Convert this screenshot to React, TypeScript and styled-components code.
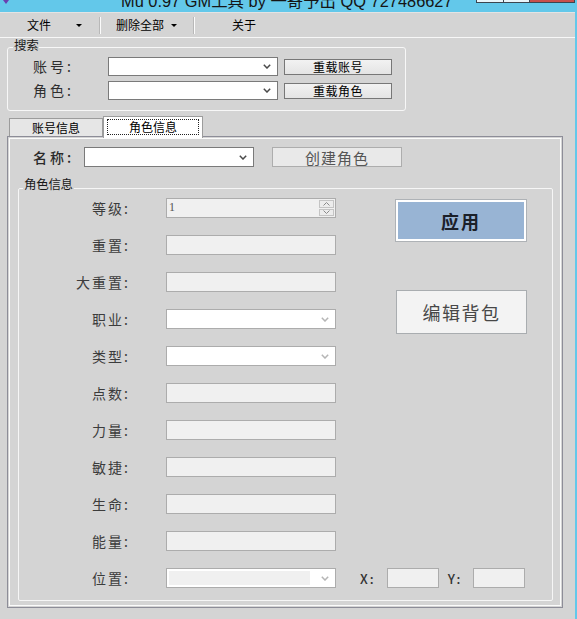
import React from "react";
import styled, { createGlobalStyle } from "styled-components";

const GlobalStyle = createGlobalStyle`
  html, body { margin: 0; padding: 0; background: #d4d4d4; }
  body { font-family: "Noto Sans CJK SC", "Noto Sans", sans-serif; overflow: hidden; }
  * { box-sizing: border-box; }
`;

const BG = "#d4d4d4";

const Window = styled.div`
  width: 577px;
  height: 619px;
  background: ${BG};
  display: flex;
  flex-direction: column;
  overflow: hidden;
`;

const TitleBar = styled.div`
  height: 12px;
  flex: none;
  background: #63c8ea;
  display: flex;
  align-items: flex-start;
  overflow: hidden;
`;

const AppIcon = styled.svg`
  flex: none;
  margin-left: 3px;
`;

const TitleText = styled.div`
  margin-left: 112px;
  margin-top: -7px;
  font: 16.4px/17px "Liberation Sans", "Noto Sans CJK SC", sans-serif;
  color: #151515;
  white-space: nowrap;
`;

const Controls = styled.div`
  margin-left: auto;
  margin-right: 2px;
  display: flex;
`;

const CtrlBtn = styled.div<{ $w: number; $close?: boolean }>`
  width: ${(p) => p.$w}px;
  height: 3px;
  background: ${(p) => (p.$close ? "#c7504d" : "#e9f5fa")};
  border: 1px solid #3b4650;
  border-top: none;
  & + & { border-left: none; }
`;

const Frame = styled.div`
  flex: 1;
  display: flex;
  flex-direction: column;
  border-right: 2px solid #63c8ea;
`;

const MenuBar = styled.div`
  height: 26px;
  flex: none;
  display: flex;
  align-items: center;
  padding-left: 27px;
  border-top: 1px solid #e4e4e4;
  border-bottom: 1px solid #f7f7f7;
  font-size: 12px;
  color: #000;
`;

const MenuItem = styled.span<{ $ml?: number }>`
  margin-left: ${(p) => p.$ml ?? 0}px;
  line-height: 16px;
  white-space: nowrap;
`;

const MenuArrow = styled.span<{ $ml: number }>`
  margin-left: ${(p) => p.$ml}px;
  width: 0;
  height: 0;
  border-left: 3px solid transparent;
  border-right: 3px solid transparent;
  border-top: 3px solid #000;
  margin-top: 1px;
`;

const MenuSep = styled.span<{ $ml: number }>`
  margin-left: ${(p) => p.$ml}px;
  width: 2px;
  height: 17px;
  border-left: 1px solid #b8b8b8;
  border-right: 1px solid #fbfbfb;
`;

const SearchGroup = styled.div`
  position: relative;
  margin: 9px 0 0 7px;
  width: 399px;
  border: 1px solid #f7f7f7;
  border-radius: 3px;
  padding: 9px 0 10px 25px;
  display: grid;
  grid-template-columns: 75px 170px 114px;
  grid-auto-rows: 19px;
  row-gap: 5px;
  align-items: center;
`;

const Caption = styled.span<{ $top: number; $left: number }>`
  position: absolute;
  top: ${(p) => p.$top}px;
  left: ${(p) => p.$left}px;
  padding: 0 1px;
  background: ${BG};
  font-size: 12.5px;
  line-height: 14px;
  letter-spacing: -0.3px;
  color: #1a1a1a;
`;

const SearchLabel = styled.span`
  font-size: 14px;
  letter-spacing: 3px;
  color: #2e2e2e;
  line-height: 19px;
`;

const Combo = styled.div<{ $light?: boolean }>`
  height: 100%;
  background: #fff;
  border: 1px solid ${(p) => (p.$light ? "#acacac" : "#7a7a7a")};
  display: flex;
  align-items: center;
  justify-content: flex-end;
  padding: 2px 6px 2px 2px;
`;

const ComboInner = styled.div`
  flex: 1;
  align-self: stretch;
  background: #f0f0f0;
  margin-right: 11px;
`;

const SmallButton = styled.div`
  margin-left: 6px;
  height: 16px;
  border: 1px solid #777;
  background: linear-gradient(#f2f2f2, #e4e4e4);
  display: flex;
  align-items: center;
  justify-content: center;
  font-size: 12px;
  color: #000;
  letter-spacing: 0.5px;
`;

const Tabs = styled.div`
  margin: 5px 0 0 7px;
  width: 556px;
  display: flex;
  flex-direction: column;
`;

const TabStrip = styled.div`
  height: 20px;
  display: flex;
  align-items: flex-end;
  padding-left: 2px;
`;

const Tab = styled.div<{ $active?: boolean }>`
  position: relative;
  z-index: ${(p) => (p.$active ? 1 : 0)};
  width: ${(p) => (p.$active ? 100 : 94)}px;
  height: ${(p) => (p.$active ? 22 : 18)}px;
  margin-bottom: ${(p) => (p.$active ? -2 : 0)}px;
  border: 1px solid #9c9c9c;
  border-bottom: none;
  background: ${(p) => (p.$active ? "#fff" : "#e6e6e6")};
  display: flex;
  align-items: center;
  justify-content: center;
  padding: ${(p) => (p.$active ? "2px 3px 3px" : "0")};
  font-size: 12px;
  color: #000;
`;

const FocusRect = styled.div`
  flex: 1;
  align-self: stretch;
  border: 1px dotted #222;
  display: flex;
  align-items: center;
  justify-content: center;
  line-height: 14px;
`;

const Panel = styled.div`
  border: 1px solid #8d8d98;
  box-shadow: inset 0 0 0 1px ${BG}, inset 0 0 0 2px #fbfbfb;
  padding: 10px 9px 6px 10px;
`;

const NameRow = styled.div`
  margin-left: 15px;
  height: 20px;
  display: grid;
  grid-template-columns: 51px 170px 148px;
  align-items: center;
`;

const NameLabel = styled.span`
  font-size: 14px;
  font-weight: 500;
  letter-spacing: 3px;
  color: #2a2a2a;
  line-height: 20px;
`;

const BigGreyButton = styled.div`
  margin-left: 18px;
  height: 20px;
  border: 1px solid #adadad;
  background: #e9e9e9;
  display: flex;
  align-items: center;
  justify-content: center;
  font-size: 15px;
  letter-spacing: 1px;
  color: #555;
`;

const InfoGroup = styled.div`
  position: relative;
  margin-top: 21px;
  border: 1px solid #f6f6f6;
  border-radius: 2px;
  padding: 9px 25px 12px 0;
  display: grid;
  grid-template-columns: 147px 170px 1fr;
  grid-template-rows: repeat(11, 20px);
  row-gap: 17px;
`;

const FieldLabel = styled.span<{ $row: number }>`
  grid-column: 1;
  grid-row: ${(p) => p.$row};
  text-align: right;
  padding-right: 36px;
  font-size: 14px;
  letter-spacing: 2px;
  line-height: 20px;
  color: #3c3c3c;
  white-space: nowrap;
`;

const FieldCell = styled.div<{ $row: number }>`
  grid-column: 2;
  grid-row: ${(p) => p.$row};
  display: flex;
`;

const TextBox = styled.div<{ $w?: number }>`
  width: ${(p) => (p.$w ? `${p.$w}px` : "100%")};
  height: 20px;
  background: #f0f0f0;
  border: 1px solid #acacac;
`;

const SpinBox = styled.div`
  width: 100%;
  height: 20px;
  background: #f0f0f0;
  border: 1px solid #acacac;
  display: flex;
`;

const SpinValue = styled.span`
  flex: 1;
  padding-left: 2px;
  font: 12px/16px "Liberation Serif", serif;
  color: #555;
`;

const SpinButtons = styled.div`
  width: 16px;
  display: flex;
  flex-direction: column;
  padding: 1px 1px 1px 0;
  gap: 1px;
`;

const SpinBtn = styled.div`
  flex: 1;
  background: #ececec;
  border: 1px solid #c4c4c4;
  display: flex;
  align-items: center;
  justify-content: center;
`;

const ButtonsCol = styled.div`
  grid-column: 3;
  grid-row: 1 / 11;
  display: flex;
  flex-direction: column;
  align-items: flex-start;
`;

const ApplyButton = styled.div`
  margin: 1px 0 0 59px;
  width: 132px;
  height: 43px;
  border: 1px solid #aeb2b6;
  padding: 2px;
  background: #fff;
  display: flex;
`;

const ApplyFace = styled.div`
  flex: 1;
  background: #98b4d4;
  display: flex;
  align-items: center;
  justify-content: center;
  font-size: 18px;
  font-weight: 600;
  letter-spacing: 2px;
  color: #1b2029;
`;

const BagButton = styled.div`
  margin: 48px 0 0 60px;
  width: 131px;
  height: 44px;
  border: 1px solid #a9adb0;
  background: #f3f3f3;
  display: flex;
  align-items: center;
  justify-content: center;
  font-size: 18px;
  letter-spacing: 1.5px;
  color: #474747;
`;

const XYRow = styled.div`
  grid-column: 3;
  grid-row: 11;
  display: flex;
  align-items: center;
  padding-left: 24px;
`;

const XYLabel = styled.span<{ $ml?: number }>`
  margin-left: ${(p) => p.$ml ?? 0}px;
  margin-right: 11px;
  font-size: 13px;
  font-weight: 500;
  letter-spacing: 2px;
  color: #333;
`;

const Chevron = ({ color = "#4a4a4a" }: { color?: string }) => (
  <svg width="8" height="5" viewBox="0 0 8 5">
    <path d="M0.8 0.8 L4 4 L7.2 0.8" fill="none" stroke={color} strokeWidth="1.5" />
  </svg>
);

const SpinArrow = ({ up }: { up?: boolean }) => (
  <svg width="7" height="4" viewBox="0 0 7 4">
    <path d={up ? "M0.5 3.5 L3.5 0.5 L6.5 3.5" : "M0.5 0.5 L3.5 3.5 L6.5 0.5"} fill="none" stroke="#8a8a8a" strokeWidth="1" />
  </svg>
);

type Kind = "spin" | "text" | "combo" | "pos";
const fields: { label: string; kind: Kind }[] = [
  { label: "等级:", kind: "spin" },
  { label: "重置:", kind: "text" },
  { label: "大重置:", kind: "text" },
  { label: "职业:", kind: "combo" },
  { label: "类型:", kind: "combo" },
  { label: "点数:", kind: "text" },
  { label: "力量:", kind: "text" },
  { label: "敏捷:", kind: "text" },
  { label: "生命:", kind: "text" },
  { label: "能量:", kind: "text" },
  { label: "位置:", kind: "pos" },
];

function renderField(kind: Kind) {
  switch (kind) {
    case "spin":
      return (
        <SpinBox>
          <SpinValue>1</SpinValue>
          <SpinButtons>
            <SpinBtn><SpinArrow up /></SpinBtn>
            <SpinBtn><SpinArrow /></SpinBtn>
          </SpinButtons>
        </SpinBox>
      );
    case "combo":
      return (
        <Combo $light style={{ width: "100%" }}>
          <Chevron color="#b5b5b5" />
        </Combo>
      );
    case "pos":
      return (
        <Combo $light style={{ width: "100%" }}>
          <ComboInner />
          <Chevron color="#b5b5b5" />
        </Combo>
      );
    default:
      return <TextBox />;
  }
}

export default function App() {
  return (
    <>
      <GlobalStyle />
      <Window>
        <TitleBar>
          <AppIcon width="6" height="4" viewBox="0 0 6 4">
            <path d="M0 0 H6 L3 4 Z" fill="#6a3fb0" />
          </AppIcon>
          <TitleText>Mu 0.97 GM工具 by 一寄予出 QQ 727486627</TitleText>
          <Controls>
            <CtrlBtn $w={28} />
            <CtrlBtn $w={26} />
            <CtrlBtn $w={45} $close />
          </Controls>
        </TitleBar>
        <Frame>
          <MenuBar>
            <MenuItem>文件</MenuItem>
            <MenuArrow $ml={25} />
            <MenuSep $ml={17} />
            <MenuItem $ml={15}>删除全部</MenuItem>
            <MenuArrow $ml={7} />
            <MenuSep $ml={16} />
            <MenuItem $ml={37}>关于</MenuItem>
          </MenuBar>

          <SearchGroup>
            <Caption $top={-10} $left={5}>搜索</Caption>
            <SearchLabel>账号:</SearchLabel>
            <Combo><Chevron /></Combo>
            <SmallButton>重载账号</SmallButton>
            <SearchLabel>角色:</SearchLabel>
            <Combo><Chevron /></Combo>
            <SmallButton>重载角色</SmallButton>
          </SearchGroup>

          <Tabs>
            <TabStrip>
              <Tab>账号信息</Tab>
              <Tab $active>
                <FocusRect>角色信息</FocusRect>
              </Tab>
            </TabStrip>
            <Panel>
              <NameRow>
                <NameLabel>名称:</NameLabel>
                <Combo><Chevron /></Combo>
                <BigGreyButton>创建角色</BigGreyButton>
              </NameRow>

              <InfoGroup>
                <Caption $top={-12} $left={4}>角色信息</Caption>
                {fields.map((f, i) => (
                  <React.Fragment key={f.label}>
                    <FieldLabel $row={i + 1}>{f.label}</FieldLabel>
                    <FieldCell $row={i + 1}>{renderField(f.kind)}</FieldCell>
                  </React.Fragment>
                ))}
                <ButtonsCol>
                  <ApplyButton>
                    <ApplyFace>应用</ApplyFace>
                  </ApplyButton>
                  <BagButton>编辑背包</BagButton>
                </ButtonsCol>
                <XYRow>
                  <XYLabel>X:</XYLabel>
                  <TextBox $w={52} />
                  <XYLabel $ml={9}>Y:</XYLabel>
                  <TextBox $w={52} />
                </XYRow>
              </InfoGroup>
            </Panel>
          </Tabs>
        </Frame>
      </Window>
    </>
  );
}
